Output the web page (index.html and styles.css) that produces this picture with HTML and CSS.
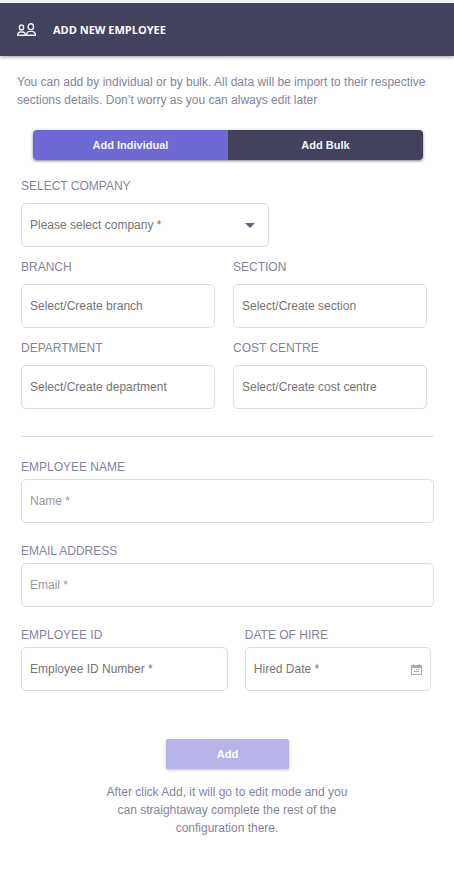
FILE: index.html
```html
<!DOCTYPE html>
<html lang="en">
<head>
<meta charset="utf-8">
<meta name="viewport" content="width=device-width, initial-scale=1">
<title>Add New Employee</title>
<link rel="stylesheet" href="styles.css">
</head>
<body>
<header class="header">
  <svg class="header-icon" viewBox="0 0 20 14" aria-hidden="true">
    <ellipse cx="4.5" cy="4.5" rx="2.1" ry="2.5"/>
    <ellipse cx="13.8" cy="3.7" rx="2.7" ry="2.9"/>
    <path d="M0.8 12.3V10.9Q1.2 9.3 3.2 9H6Q7.8 9.3 8.2 10.9V12.3Z"/>
    <path d="M9.6 12.3V10.6Q10 8.9 12.3 8.4H15.4Q17.8 8.9 18.3 10.6V12.3Z"/>
  </svg>
  <h1 class="title">ADD NEW EMPLOYEE</h1>
</header>
<main class="content">
  <p class="intro">You can add by individual or by bulk. All data will be import to their respective sections details. Don’t worry as you can always edit later</p>
  <div class="modes">
    <button class="mode mode-active" type="button">Add Individual</button>
    <button class="mode" type="button">Add Bulk</button>
  </div>
  <form class="form">
    <section class="placement">
      <div class="field field-company">
        <label for="company">SELECT COMPANY</label>
        <div class="control">
          <select id="company" class="input select"><option>Please select company *</option></select>
          <svg class="arrow" viewBox="0 0 10 5" aria-hidden="true"><path d="M0 0H10L5 5Z"/></svg>
        </div>
      </div>
      <div class="pair">
        <div class="field"><label for="branch">BRANCH</label><input id="branch" class="input" type="text" placeholder="Select/Create branch"></div>
        <div class="field"><label for="section">SECTION</label><input id="section" class="input" type="text" placeholder="Select/Create section"></div>
        <div class="field"><label for="department">DEPARTMENT</label><input id="department" class="input" type="text" placeholder="Select/Create department"></div>
        <div class="field"><label for="cost">COST CENTRE</label><input id="cost" class="input" type="text" placeholder="Select/Create cost centre"></div>
      </div>
    </section>
    <hr class="divider">
    <section class="details">
      <div class="field"><label for="name">EMPLOYEE NAME</label><input id="name" class="input muted" type="text" placeholder="Name *"></div>
      <div class="field"><label for="email">EMAIL ADDRESS</label><input id="email" class="input muted" type="email" placeholder="Email *"></div>
      <div class="hire">
        <div class="field"><label for="employee-id">EMPLOYEE ID</label><input id="employee-id" class="input" type="text" placeholder="Employee ID Number *"></div>
        <div class="field">
          <label for="hired">DATE OF HIRE</label>
          <div class="control">
            <input id="hired" class="input dated" type="text" placeholder="Hired Date *">
            <svg class="calendar" viewBox="0 0 11 11" aria-hidden="true">
              <path d="M0 1H11V11H0ZM1 4V10H10V4Z" fill-rule="evenodd"/>
              <path d="M2 0H3V2H2ZM8 0H9V2H8ZM5 5H6V6H5ZM7 5H8V6H7ZM3 7H8V8H3Z"/>
            </svg>
          </div>
        </div>
      </div>
    </section>
    <button class="submit" type="submit" disabled>Add</button>
  </form>
  <p class="note">After click Add, it will go to edit mode and you can straightaway complete the rest of the configuration there.</p>
</main>
</body>
</html>
```
FILE: styles.css
```css
* {
  box-sizing: border-box;
}

body {
  margin: 0;
  border-top: 3px solid #f1f1f4;
  background: #fff;
  color: #83859b;
  font: 12px/18px "Liberation Sans", Arial, sans-serif;
}

h1, p {
  margin: 0;
}

button, input, select {
  font-family: inherit;
}

.header {
  display: flex;
  align-items: center;
  gap: 16px;
  height: 53px;
  padding: 0 17px;
  background: #43425d;
  box-shadow: 0 1px 4px rgba(0, 0, 0, 0.4);
}

.header-icon {
  width: 20px;
  height: 14px;
  fill: none;
  stroke: #f0f0f4;
  stroke-width: 1.4;
}

.title {
  color: #fff;
  font: 700 11px/18px "Open Sans", sans-serif;
}

.content {
  padding: 17px;
}

.modes {
  display: flex;
  margin: 21px 14px 17px 16px;
  border-radius: 4px;
  box-shadow: 0 1px 3px rgba(0, 0, 0, 0.5);
  overflow: hidden;
}

.mode {
  flex: 1;
  height: 30px;
  padding: 0;
  border: 0;
  background: #43425d;
  color: #f4f4f8;
  font-size: 11px;
  font-weight: 700;
}

.mode-active {
  background: #6f69d6;
}

.form {
  padding: 0 3px 0 4px;
}

.placement {
  display: grid;
  gap: 11px;
  padding-right: 7px;
}

.field {
  display: grid;
  gap: 8px;
  min-width: 0;
}

.field-company {
  width: 61%;
}

.pair {
  display: grid;
  grid-template-columns: 1fr 1fr;
  gap: 11px 18px;
}

.control {
  position: relative;
}

.input {
  display: block;
  width: 100%;
  height: 44px;
  padding: 0 8px;
  border: 1px solid #dedede;
  border-radius: 5px;
  background: #fff;
  color: #757575;
  font-size: 12px;
}

.input::placeholder {
  color: #757575;
  opacity: 1;
}

.muted::placeholder {
  color: #999;
}

.select {
  appearance: none;
}

.arrow {
  position: absolute;
  top: 20px;
  right: 14px;
  width: 10px;
  height: 5px;
  fill: #656379;
  pointer-events: none;
}

.dated {
  padding-right: 28px;
}

.calendar {
  position: absolute;
  top: 17px;
  right: 9px;
  width: 11px;
  height: 11px;
  fill: #aaa7c9;
}

.divider {
  height: 1px;
  margin: 27px 0 21px;
  border: 0;
  background: #dedede;
}

.details {
  display: grid;
  gap: 19px;
}

.details .field {
  gap: 3px;
}

.hire {
  display: grid;
  grid-template-columns: 10fr 9fr;
  gap: 17px;
  padding-right: 3px;
}

.submit {
  display: block;
  width: 30%;
  height: 30px;
  margin: 48px auto 14px;
  padding: 0;
  border: 0;
  border-radius: 2px;
  background: #b7b4ea;
  color: #fff;
  box-shadow: 0 1px 3px rgba(0, 0, 0, 0.25);
  font-size: 11px;
  font-weight: 700;
}

.note {
  max-width: 260px;
  margin: 0 auto;
  text-align: center;
}
```
